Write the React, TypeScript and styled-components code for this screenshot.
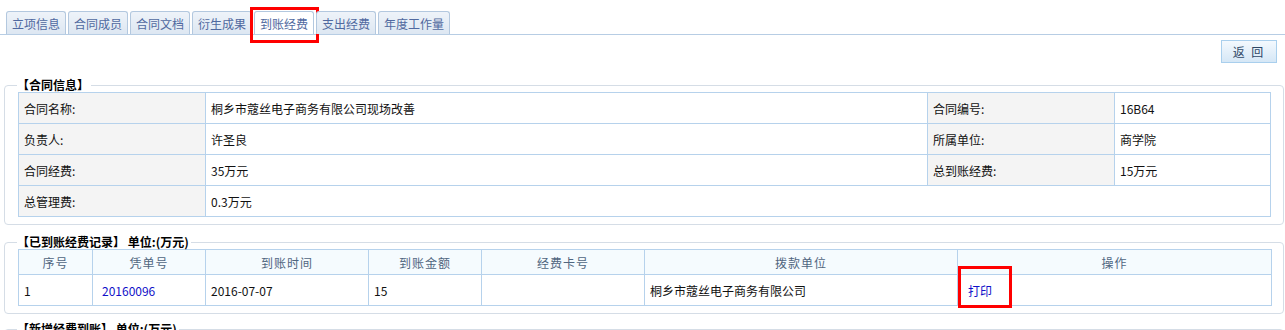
import React from "react";
import styled, { createGlobalStyle } from "styled-components";

const GlobalStyle = createGlobalStyle`
  html, body {
    margin: 0;
    padding: 0;
    background: #ffffff;
    font-family: "Noto Sans CJK SC", "Liberation Sans", sans-serif;
    font-size: 12px;
    color: #000;
  }
`;

const Page = styled.div`
  width: 1285px;
  overflow: hidden;
`;

const TabBar = styled.ul`
  display: flex;
  gap: 2px;
  list-style: none;
  margin: 0;
  padding: 11px 0 0 6px;
  border-bottom: 1px solid #b7cde4;
  height: 23px;
`;

const Tab = styled.li<{ $active?: boolean }>`
  position: relative;
  box-sizing: border-box;
  height: 23px;
  padding: 0 5px;
  display: flex;
  align-items: center;
  border: 1px solid #b3c8df;
  border-bottom: none;
  border-radius: 3px 3px 0 0;
  background: ${(p) =>
    p.$active ? "#ffffff" : "linear-gradient(#eef3f9, #dde7f2)"};
  color: #5069a0;
  font-size: 12px;
  white-space: nowrap;
  cursor: pointer;
`;

const Marker = styled.span`
  position: absolute;
  border: 3px solid #ff0000;
  pointer-events: none;
`;

const TabMarker = styled(Marker)`
  left: -5px;
  top: -5px;
  right: -6px;
  bottom: -9px;
`;

const Toolbar = styled.div`
  display: flex;
  justify-content: flex-end;
  padding: 5px 8px 0 0;
`;

const BackButton = styled.button`
  box-sizing: border-box;
  width: 56px;
  height: 23px;
  border: 1px solid #a9cfed;
  background: linear-gradient(#f4f9fe, #d5e7f6);
  color: #2e4766;
  font-family: inherit;
  font-size: 12px;
  letter-spacing: 2px;
  padding: 0;
  cursor: pointer;
`;

const Group = styled.fieldset<{ $top: number }>`
  margin: ${(p) => p.$top}px 1px 0 4px;
  border: 1px solid #d5dde6;
  border-radius: 4px;
  padding: 0 12px 7px 13px;
  min-width: 0;
`;

const Legend = styled.legend`
  font-size: 12px;
  font-weight: bold;
  line-height: 14px;
  padding: 0 2px 0 0;
  margin-left: -1px;
  white-space: pre;
`;

const Table = styled.table`
  width: 100%;
  border-collapse: collapse;
  table-layout: fixed;
`;

const Cell = styled.td<{ $label?: boolean }>`
  position: relative;
  height: 30px;
  padding: 0 5px;
  border: 1px solid #b6d2ec;
  background: ${(p) => (p.$label ? "#f4f4f4" : "#ffffff")};
  color: #111;
  font-size: 12px;
  white-space: nowrap;
`;

const HeadCell = styled.th`
  height: 24px;
  padding: 0;
  border: 1px solid #b6d2ec;
  background: #f5fbfe;
  color: #50667f;
  font-weight: normal;
  font-size: 12px;
  letter-spacing: 1px;
  text-align: center;
`;

const Link = styled.a<{ $indent?: number }>`
  position: relative;
  color: #1010c8;
  text-decoration: none;
  margin-left: ${(p) => p.$indent ?? 0}px;
  cursor: pointer;
`;

const ActionMarker = styled(Marker)`
  left: 0;
  top: -9px;
  width: 48px;
  height: 36px;
`;

const tabs = ["立项信息", "合同成员", "合同文档", "衍生成果", "到账经费", "支出经费", "年度工作量"];

const info = [
  { a: "合同名称:", b: "桐乡市蔻丝电子商务有限公司现场改善", c: "合同编号:", d: "16B64" },
  { a: "负责人:", b: "许圣良", c: "所属单位:", d: "商学院" },
  { a: "合同经费:", b: "35万元", c: "总到账经费:", d: "15万元" },
];

const recordCols = [
  { title: "序号", width: 74 },
  { title: "凭单号", width: 113 },
  { title: "到账时间", width: 163 },
  { title: "到账金额", width: 113 },
  { title: "经费卡号", width: 163 },
  { title: "拨款单位", width: 313 },
  { title: "操作", width: 314 },
];

export default function App() {
  return (
    <Page>
      <GlobalStyle />
      <TabBar>
        {tabs.map((t) => (
          <Tab key={t} $active={t === "到账经费"}>
            {t}
            {t === "到账经费" && <TabMarker />}
          </Tab>
        ))}
      </TabBar>

      <Toolbar>
        <BackButton>返 回</BackButton>
      </Toolbar>

      <Group $top={15}>
        <Legend>【合同信息】</Legend>
        <Table>
          <colgroup>
            <col style={{ width: 187 }} />
            <col style={{ width: 722 }} />
            <col style={{ width: 187 }} />
            <col />
          </colgroup>
          <tbody>
            {info.map((r) => (
              <tr key={r.a}>
                <Cell $label>{r.a}</Cell>
                <Cell>{r.b}</Cell>
                <Cell $label>{r.c}</Cell>
                <Cell>{r.d}</Cell>
              </tr>
            ))}
            <tr>
              <Cell $label>总管理费:</Cell>
              <Cell colSpan={3}>0.3万元</Cell>
            </tr>
          </tbody>
        </Table>
      </Group>

      <Group $top={10}>
        <Legend>【已到账经费记录】 单位:(万元)</Legend>
        <Table>
          <colgroup>
            {recordCols.map((c) => (
              <col key={c.title} style={{ width: c.width }} />
            ))}
          </colgroup>
          <thead>
            <tr>
              {recordCols.map((c) => (
                <HeadCell key={c.title}>{c.title}</HeadCell>
              ))}
            </tr>
          </thead>
          <tbody>
            <tr>
              <Cell>1</Cell>
              <Cell>
                <Link $indent={4}>20160096</Link>
              </Cell>
              <Cell>2016-07-07</Cell>
              <Cell>15</Cell>
              <Cell></Cell>
              <Cell>桐乡市蔻丝电子商务有限公司</Cell>
              <Cell>
                <ActionMarker />
                <Link $indent={5}>打印</Link>
              </Cell>
            </tr>
          </tbody>
        </Table>
      </Group>

      <Group $top={8}>
        <Legend>【新增经费到账】 单位:(万元)</Legend>
        <div style={{ height: 40 }} />
      </Group>
    </Page>
  );
}
